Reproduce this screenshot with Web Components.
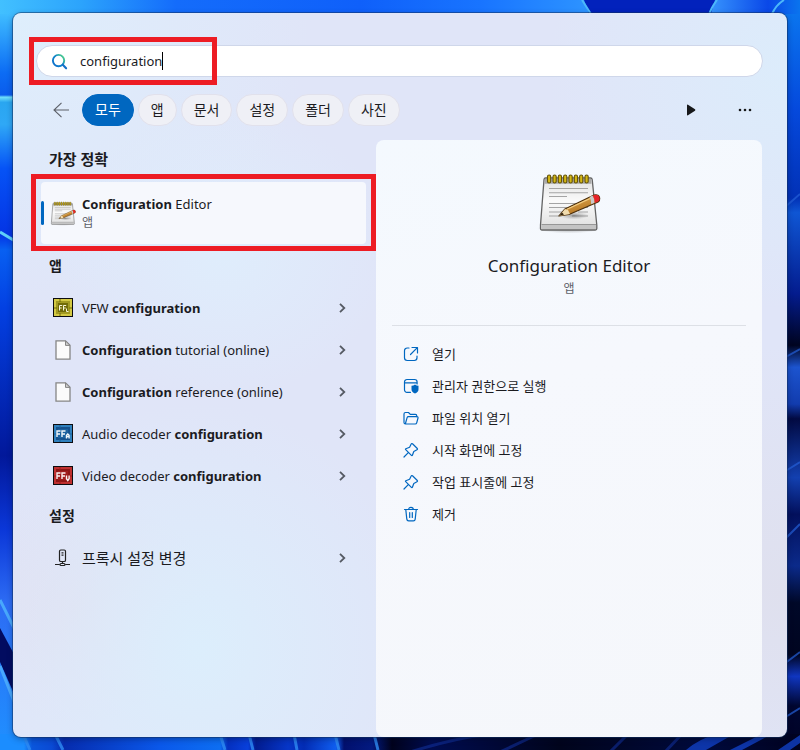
<!DOCTYPE html>
<html lang="ko">
<head>
<meta charset="utf-8">
<title>configuration</title>
<style>
  html, body { margin: 0; }
  body {
    font-family: "Noto Sans", "Noto Sans CJK KR", sans-serif;
    font-size: 13px;
    color: #1b1b1f;
    --accent: #0067c0;
    --mark: #ed1c24;
  }
</style>
</head>
<body>
<desk-top>
  <search-window>
    <search-field slot="search" value="configuration"></search-field>
    <filter-bar slot="filters"></filter-bar>
    <result-group slot="results" heading="가장 정확">
      <result-item best icon="notepad" kind="앱"><b>Configuration</b> Editor</result-item>
    </result-group>
    <result-group slot="results" heading="앱">
      <result-item icon="ffl">VFW <b>configuration</b></result-item>
      <result-item icon="page"><b>Configuration</b> tutorial (online)</result-item>
      <result-item icon="page"><b>Configuration</b> reference (online)</result-item>
      <result-item icon="ffa">Audio decoder <b>configuration</b></result-item>
      <result-item icon="ffv">Video decoder <b>configuration</b></result-item>
    </result-group>
    <result-group slot="results" heading="설정">
      <result-item icon="proxy" korean>프록시 설정 변경</result-item>
    </result-group>
    <detail-pane slot="detail" heading="Configuration Editor" kind="앱">
      <action-item icon="open">열기</action-item>
      <action-item icon="admin">관리자 권한으로 실행</action-item>
      <action-item icon="folder">파일 위치 열기</action-item>
      <action-item icon="pin">시작 화면에 고정</action-item>
      <action-item icon="pin">작업 표시줄에 고정</action-item>
      <action-item icon="trash">제거</action-item>
    </detail-pane>
  </search-window>
</desk-top>

<script>
const badge = (edge, mid, core, glyph) => `
  <svg viewBox="0 0 20 20" aria-hidden="true">
    <rect width="20" height="19" fill="#0c0c10"/><rect x="1" y="1" width="18" height="17" fill="${edge}"/>
    <rect x="3" y="3" width="14" height="13" fill="${mid}"/><rect x="5" y="5" width="10" height="9" fill="${core}"/>
    <path d="M7 1v3M1 10h3M16 10h3M7 15v3" stroke="${core}" stroke-width="1"/>
    ${glyph}
  </svg>`;

const ICONS = {
  notepad: `<svg viewBox="0 0 64 64" aria-hidden="true">
    <defs>
      <linearGradient id="paper" x1="0" y1="0" x2="0" y2="1"><stop offset="0" stop-color="#e2e2e2"/><stop offset=".45" stop-color="#fafafa"/><stop offset="1" stop-color="#dedede"/></linearGradient>
      <linearGradient id="wood" x1="0" y1="0" x2=".5" y2="1"><stop offset="0" stop-color="#e9b45a"/><stop offset="1" stop-color="#b06f1c"/></linearGradient>
      <radialGradient id="shade"><stop offset="0" stop-color="#555" stop-opacity=".55"/><stop offset="1" stop-color="#777" stop-opacity="0"/></radialGradient>
    </defs>
    <ellipse cx="32" cy="58.500" rx="32" ry="5" fill="url(#shade)"/>
    <path d="M8.500 8h45q1.500 0 1.700 1.500L59.800 55v3.500q0 1.500-1.500 1.500H5q-1.500 0-1.500-1.500V55L7 9.500Q7.200 8 8.500 8z" fill="url(#paper)" stroke="#636363" stroke-width="1.300"/>
    <path d="M8 8.700h46l.5 5H7.500z" fill="#a9a9a9"/>
    <path d="M4.500 54.500h54.500v4.500h-54.500z" fill="#c4c4c4"/><path d="M4.500 54.500h54.500" stroke="#888" stroke-width=".8"/>
    <path d="M12 18.500h39M12 22.800h39M12 26.500h18M12 33.500h28M12 37.500h20M12 42h14M12 46h10M45 37.500h6M41 42h10M35 46h16" stroke="#a4a4a4" stroke-width="1.100"/>
    <ellipse cx="37" cy="45.500" rx="15" ry="4" fill="url(#shade)"/>
    <g fill="#d5b812" stroke="#645208" stroke-width="1.100">
      <rect x="10.500" y="5" width="3.200" height="8" rx="1.600"/><rect x="16" y="5" width="3.200" height="8" rx="1.600"/><rect x="21.300" y="5" width="3.200" height="8" rx="1.600"/><rect x="26.600" y="5" width="3.200" height="8" rx="1.600"/><rect x="32" y="5" width="3.200" height="8" rx="1.600"/><rect x="37.300" y="5" width="3.200" height="8" rx="1.600"/><rect x="42.600" y="5" width="3.200" height="8" rx="1.600"/><rect x="48" y="5" width="3.200" height="8" rx="1.600"/>
    </g>
    <path d="M22 46l6-7L57 25q5-1 5.700 3 .3 2.500-1.700 4L32 44.500z" fill="url(#wood)" stroke="#4b2e0a" stroke-width="1.200" stroke-linejoin="round"/>
    <path d="M22 46l6-7 3 1 2 4z" fill="#f1dcae"/><path d="M22 46l3-3.500 2 2.100z" fill="#32220c"/>
    <path d="M30 39.200l23-10.700" stroke="#f3cf85" stroke-width="1.200"/>
    <path d="M52.500 27l3-1.400q2 3 2 7.200l-3.300 1.500q.3-4.200-1.700-7.300z" fill="#c9c9c9"/>
    <path d="M55.800 25.500q5.400-2 6.500 1.500t-1.500 4.800l-3 1.200q0-4.300-2-7.500z" fill="#e5242a"/>
  </svg>`,
  page: `<svg viewBox="0 0 20 20" aria-hidden="true"><path d="M3 .8h9.500L17 5.200v14H3z" fill="#fbfbfb" stroke="#858585" stroke-width="1.300"/><path d="M12.500 1v4.400H17z" fill="#cfcfcf" stroke="#858585"/></svg>`,
  ffl: badge('#d3c943', '#a29a22', '#716b08', '<path d="M6.500 12.500V7.500h2.700M6.500 10h2.200M10.500 12.500V7.500h2.700M10.500 10h2.200M13.500 10.500v3h2" fill="none" stroke="#f8f6d8" stroke-width="1"/>'),
  ffa: badge('#2f80bd', '#15518d', '#1d629f', '<path d="M4 13V7h3.500M4 10h3M9 13V7h3.500M9 10h3M13.500 14.500v-3.200l1.300-1.300 1.300 1.300v3.200M13.500 12.500h2.600" fill="none" stroke="#f2f8fc" stroke-width="1.400"/>'),
  ffv: badge('#bf3030', '#8e1515', '#a01d1d', '<path d="M4 13V7h3.500M4 10h3M9 13V7h3.500M9 10h3M13.500 9.500v3.200l1.300 1.800 1.300-1.800V9.500" fill="none" stroke="#fdf3f3" stroke-width="1.400"/>'),
  proxy: `<svg viewBox="0 0 20 20" aria-hidden="true" fill="none" stroke="#222" stroke-width="1.200"><rect x="6.500" y="2" width="6" height="11.500" rx="1.300"/><path d="M8.500 4.800h2M8.500 7.200h2M9.500 13.500v2M2 16.500h4.800M12.200 16.500h4.800"/><rect x="7" y="15.500" width="5" height="2" rx="1"/></svg>`,
  open: `<svg viewBox="0 0 16 16" aria-hidden="true"><path d="M6 2H4.200A2.700 2.700 0 0 0 1.500 4.700v7.100a2.700 2.700 0 0 0 2.700 2.700h7.100a2.700 2.700 0 0 0 2.700-2.700V10M9 1.500h5.500V7M14.300 1.700L7.500 8.500"/></svg>`,
  admin: `<svg viewBox="0 0 16 16" aria-hidden="true"><path d="M7.500 14.300H4A2.500 2.500 0 0 1 1.500 11.800V4A2.500 2.500 0 0 1 4 1.500h7.600A2.500 2.500 0 0 1 14.100 4v2M1.500 4.800h12.600"/><path d="M12 6.500q1.500 1.300 3.500 1.300v3.400q0 3-3.500 4.300-3.500-1.300-3.500-4.300V7.800q2 0 3.500-1.300z" fill="currentColor" stroke="none"/></svg>`,
  folder: `<svg viewBox="0 0 16 16" aria-hidden="true"><path d="M2.500 14q-1.500 0-1.500-1.500V4Q1 2.500 2.500 2.500h3l1.800 1.800h5q1.500 0 1.500 1.700v.8M2.300 14h9.900q1.200 0 1.500-1.200l1.300-4.800q.3-1.300-1-1.300H5.400q-1 0-1.300 1z"/></svg>`,
  pin: `<svg viewBox="0 0 16 16" aria-hidden="true"><path d="M9.500 1.800l4.800 4.700q.6.800-.3 1.300l-3.200 1.700-1.400 3.800q-.4.700-1 .1L2.700 7.700q-.6-.7.2-1l3.700-1.400L8.200 2q.5-.9 1.300-.2zM5.300 10.700L1 15"/></svg>`,
  trash: `<svg viewBox="0 0 16 16" aria-hidden="true"><path d="M1.500 3.500h13M5.700 3.500q0-2.200 2.300-2.200t2.300 2.200M2.800 3.700l1 9.400q.2 1.700 1.800 1.700h4.800q1.600 0 1.800-1.700l1-9.400M6.700 6.500v5M9.300 6.500v5"/></svg>`,
  chevron: `<svg viewBox="0 0 12 12" aria-hidden="true"><path d="M4 1.800L8.300 6 4 10.200" fill="none" stroke="#555a63" stroke-width="1.800"/></svg>`
};

function define(name, render) {
  customElements.define(name, class extends HTMLElement {
    constructor() {
      super();
      this.attachShadow({ mode: 'open' });
    }
    connectedCallback() { this.shadowRoot.innerHTML = render(this); }
  });
}

define('desk-top', () => `
  <style>
    :host { display: grid; position: relative; min-height: 100vh; box-sizing: border-box; padding: 13px; background: #0440d8; overflow: hidden; }
    .wallpaper { position: absolute; inset: 0; width: 100%; height: 100%; }
  </style>
  <svg class="wallpaper" viewBox="0 0 800 750" preserveAspectRatio="none" aria-hidden="true">
    <defs>
      <linearGradient id="top" x1="0" x2="1" y1="0" y2="0"><stop offset="0" stop-color="#42c0ff"/><stop offset=".1" stop-color="#2ca4fc"/><stop offset=".22" stop-color="#146cfb"/><stop offset=".45" stop-color="#0f60fa"/><stop offset=".6" stop-color="#1874ff"/><stop offset=".73" stop-color="#2c92ff"/><stop offset=".88" stop-color="#3c9cff"/><stop offset=".96" stop-color="#0a48e8"/><stop offset="1" stop-color="#0a74ee"/></linearGradient>
      <linearGradient id="left" x1="0" x2="0" y1="0" y2="1"><stop offset="0" stop-color="#3fbcff"/><stop offset=".08" stop-color="#0c6cf4"/><stop offset=".11" stop-color="#0a5cec"/><stop offset=".113" stop-color="#6fe0fb"/><stop offset=".12" stop-color="#2aa6f0"/><stop offset=".15" stop-color="#2fa8f6"/><stop offset=".21" stop-color="#0653f6"/><stop offset=".3" stop-color="#0434e4"/><stop offset=".32" stop-color="#0860f2"/><stop offset=".4" stop-color="#0340e2"/><stop offset=".6" stop-color="#02189a"/><stop offset=".7" stop-color="#0b37d8"/><stop offset=".8" stop-color="#2d6cf4"/><stop offset="1" stop-color="#1f90ff"/></linearGradient>
      <linearGradient id="right" x1="0" x2="0" y1="0" y2="1"><stop offset="0" stop-color="#0a74ee"/><stop offset=".13" stop-color="#0549dc"/><stop offset=".25" stop-color="#0231b6"/><stop offset=".27" stop-color="#0f56d4"/><stop offset=".38" stop-color="#041c8e"/><stop offset=".45" stop-color="#000420"/><stop offset=".48" stop-color="#1c54cf"/><stop offset=".53" stop-color="#123cae"/><stop offset=".55" stop-color="#020a42"/><stop offset=".63" stop-color="#1340b0"/><stop offset=".68" stop-color="#03105c"/><stop offset=".75" stop-color="#0b2a8a"/><stop offset=".8" stop-color="#000828"/><stop offset=".87" stop-color="#000520"/><stop offset=".9" stop-color="#1036c0"/><stop offset=".94" stop-color="#000630"/><stop offset="1" stop-color="#000224"/></linearGradient>
      <linearGradient id="bottom" x1="0" x2="1" y1="0" y2="0"><stop offset="0" stop-color="#1b8dff"/><stop offset=".03" stop-color="#1b8dff"/><stop offset=".04" stop-color="#0a56dc"/><stop offset=".065" stop-color="#0a4ad4"/><stop offset=".08" stop-color="#062cae"/><stop offset=".2" stop-color="#0a58ea"/><stop offset=".275" stop-color="#0d6ef2"/><stop offset=".285" stop-color="#0530c0"/><stop offset=".31" stop-color="#0840dc"/><stop offset=".32" stop-color="#021c90"/><stop offset=".36" stop-color="#0636c8"/><stop offset=".38" stop-color="#032cb4"/><stop offset=".42" stop-color="#0f5ef0"/><stop offset=".43" stop-color="#02106e"/><stop offset=".465" stop-color="#031a80"/><stop offset=".49" stop-color="#00021c"/><stop offset=".54" stop-color="#000c50"/><stop offset=".7" stop-color="#00041c"/><stop offset=".88" stop-color="#000a3c"/><stop offset="1" stop-color="#000220"/></linearGradient>
    </defs>
    <rect width="800" height="30" fill="url(#top)"/>
    <path d="M584 0h131l-7 24H593z" fill="#0222bc"/><path d="M582 0l9 14M717 0q-6 8-8 15M784 0q-8 5-12 14" fill="none" stroke="#4cb8fa" stroke-width="2"/>
    <rect y="14" width="30" height="736" fill="url(#left)"/>
    <path d="M0 232l15 9" stroke="#5fd0fa" stroke-width="3"/>
    <path d="M0 628l15 28v40L0 662z" fill="#020c60"/><path d="M0 600l15 30M0 666l15 38" stroke="#48a8fc" stroke-width="3"/>
    <rect x="770" y="14" width="30" height="736" fill="url(#right)"/>
    <path d="M784 208l16-14M784 358l16-9M784 472l16-10M784 540l16-16M784 664l16-12M784 718l16-10" stroke="#2560d8" stroke-width="2" opacity=".7"/>
    <rect y="734" width="800" height="16" fill="url(#bottom)"/>
    <path d="M23 734l7 16M55 734l8 16M220 734l5 16M249 734l4 16M294 734l3 16M335 734l4 16M374 734l4 16" stroke="#2f8cf4" stroke-width="3" opacity=".8"/>
    <path d="M410 752q45-14 80-18M500 752l34-16M610 752l18-18M665 752l17-18" stroke="#112f98" stroke-width="3" opacity=".6" fill="none"/>
    <path d="M686 750q14-12 32-16h16l-28 16zM730 750l32-16h10l-30 16zM778 750l22-15v8l-10 7z" fill="#1040c4" opacity=".8"/>
  </svg>
  <slot></slot>`);

define('search-window', () => `
  <style>
    :host {
      display: flex; flex-direction: column; position: relative; box-sizing: border-box; min-width: 0;
      padding-top: 32px; border-radius: 8px; box-shadow: 0 0 0 1px #12306080, 0 2px 6px #00102860;
      background:
        radial-gradient(circle at 100% 8%, #dcecfb 0, #dcecfb00 240px),
        radial-gradient(circle at 0 0, #deeefc 0, #deeefc00 300px),
        radial-gradient(ellipse at 27% 33%, #dfedfc 0, #dfedfc00 170px),
        radial-gradient(ellipse at 24% 88%, #dceefc 0, #dceefc00 230px),
        radial-gradient(ellipse at 8% 82%, #e2dff0 0, #e2dff000 140px),
        radial-gradient(ellipse at 100% 80%, #dfe0ee 0, #dfe0ee00 330px),
        #e0e5f8;
    }
    .search { padding: 0 24px 0 23px; }
    .filters { padding: 17px 24px 14px 40px; }
    main { flex: 1; display: grid; grid-template-columns: minmax(0, 363px) minmax(0, 1fr); padding-right: 25px; }
    .results { padding: 0 10px 24px 28px; }
    .detail { display: grid; }
  </style>
  <div class="search"><slot name="search"></slot></div>
  <div class="filters"><slot name="filters"></slot></div>
  <main>
    <div class="results"><slot name="results"></slot></div>
    <div class="detail"><slot name="detail"></slot></div>
  </main>`);

define('search-field', host => `
  <style>
    :host { display: block; position: relative; }
    label {
      display: flex; align-items: center; height: 32px; box-sizing: border-box; padding: 0 14px;
      border: 1px solid #cfd7ea; border-radius: 16px; background: #fff; cursor: text;
    }
    svg { width: 17px; height: 17px; margin-right: 12px; }
    input { field-sizing: content; border: 0; padding: 0; margin: 0; outline: 0; background: none; font: inherit; font-size: 13px; color: #1b1b1f; line-height: 20px; }
    .caret { width: 1px; height: 18px; background: #000; }
    .mark { position: absolute; left: -7px; top: -8px; width: 188px; height: 48px; box-sizing: border-box; border: 5px solid var(--mark); pointer-events: none; }
  </style>
  <label>
    <svg viewBox="0 0 18 18" aria-hidden="true">
      <defs><linearGradient id="lens" x1="0" y1=".8" x2="1" y2="0"><stop offset="0" stop-color="#0d70cc"/><stop offset=".5" stop-color="#1288c8"/><stop offset=".85" stop-color="#46c890"/></linearGradient></defs>
      <circle cx="8" cy="8" r="6" fill="none" stroke="url(#lens)" stroke-width="2"/>
      <path d="M12.500 12.500l3.500 3.700" stroke="#1570c8" stroke-width="2.200" stroke-linecap="round"/>
    </svg>
    <input type="text" aria-label="검색" value="${host.getAttribute('value')}"><span class="caret"></span>
  </label>
  <div class="mark"></div>`);

define('filter-bar', () => `
  <style>
    :host { display: flex; align-items: center; }
    button { font: inherit; color: inherit; border: 0; padding: 0; background: none; }
    .back { display: flex; width: 16px; margin-right: 13px; }
    .back svg { width: 16px; height: 16px; }
    nav { display: flex; gap: 4px; flex: 1; }
    nav button { height: 32px; padding: 0 12px; font-size: 14px; line-height: 20px; border: 1px solid #e1e1ec; border-radius: 16px; background: #eff0f6; }
    nav button[aria-pressed=true] { background: var(--accent); border-color: var(--accent); color: #fff; }
    .tools { display: flex; gap: 38px; align-items: center; padding-right: 10px; }
    .tools button { display: flex; }
    .tools svg { width: 16px; height: 16px; }
  </style>
  <button class="back" aria-label="뒤로"><svg viewBox="0 0 16 16"><path d="M16 8H1M8.500 .8L1 8l7.500 7.200" fill="none" stroke="#5c6068" stroke-width="1.100"/></svg></button>
  <nav>
    ${['모두', '앱', '문서', '설정', '폴더', '사진'].map((t, i) => `<button aria-pressed="${i === 0}">${t}</button>`).join('')}
  </nav>
  <div class="tools">
    <button aria-label="다음"><svg viewBox="0 0 16 16"><path d="M4 3.300v9.400q0 1 1 .6l7-4.600q.8-.7 0-1.400L5 2.700q-1-.4-1 .6z" fill="#17181a"/></svg></button>
    <button aria-label="옵션"><svg viewBox="0 0 16 16" fill="#17181a"><circle cx="3" cy="8" r="1.300"/><circle cx="8" cy="8" r="1.300"/><circle cx="13" cy="8" r="1.300"/></svg></button>
  </div>`);

define('result-group', host => `
  <style>
    :host { display: block; }
    h2 { margin: 0; padding: 9px 0 11px 8px; font-size: 15px; line-height: 20px; font-weight: 600; }
    :host([heading="앱"]) h2, :host([heading="설정"]) h2 { font-size: 14px; }
  </style>
  <h2>${host.getAttribute('heading')}</h2>
  <slot></slot>`);

define('result-item', host => {
  const best = host.hasAttribute('best');
  return `
  <style>
    :host { display: block; position: relative; }
    :host([best]) { margin: 2px 0 3px; }
    button {
      display: flex; align-items: center; width: 100%; height: 42px; padding: 0 18px 0 12px; margin: 0;
      border: 0; background: none; font: inherit; color: inherit; text-align: left; line-height: 20px;
    }
    :host([korean]) button { font-size: 15px; }
    :host([best]) button { height: 62px; padding-left: 9px; border-radius: 4px; background: #f6f8fd; }
    .icon { flex: none; display: flex; width: 20px; margin-right: 9px; }
    :host([best]) .icon { width: 26px; margin-right: 6px; }
    .icon svg { width: 100%; }
    .text { flex: 1; min-width: 0; }
    small { display: block; margin-top: 1px; padding-bottom: 2px; font-size: 12px; line-height: 16px; color: #5d6068; }
    .chevron { display: flex; width: 12px; }
    .bar { position: absolute; left: 0; top: 19px; width: 3px; height: 24px; border-radius: 2px; background: var(--accent); }
    .mark { position: absolute; inset: -8px -10px -7px; border: 5px solid var(--mark); pointer-events: none; z-index: 1; }
    ::slotted(b) { font-weight: 700; }
  </style>
  <button>
    <span class="icon">${ICONS[host.getAttribute('icon')]}</span>
    <span class="text"><slot></slot>${best ? `<small>${host.getAttribute('kind')}</small>` : ''}</span>
    ${best ? '' : `<span class="chevron">${ICONS.chevron}</span>`}
  </button>
  ${best ? '<span class="bar"></span><span class="mark"></span>' : ''}`;
});

define('detail-pane', host => `
  <style>
    :host { display: block; padding: 30px 16px; border-radius: 8px; background: linear-gradient(165deg, #f4f9fe, #f6f8fd 40%, #f5f7fb); }
    header { display: flex; flex-direction: column; align-items: center; padding-bottom: 28px; border-bottom: 1px solid #dde0e6; }
    header svg { width: 64px; height: 64px; }
    h1 { margin: 20px 0 0; font-size: 17px; line-height: 24px; font-weight: 400; }
    small { margin-top: 3px; font-size: 12px; line-height: 16px; color: #5d6068; }
    .actions { padding-top: 12px; }
  </style>
  <header>${ICONS.notepad}<h1>${host.getAttribute('heading')}</h1><small>${host.getAttribute('kind')}</small></header>
  <div class="actions"><slot></slot></div>`);

define('action-item', host => `
  <style>
    :host { display: block; }
    button { display: flex; align-items: center; gap: 13px; width: 100%; height: 32px; padding: 0 11px; border: 0; background: none; font: inherit; font-size: 13px; line-height: 18px; color: inherit; text-align: left; }
    svg { flex: none; width: 16px; height: 16px; color: var(--accent); fill: none; stroke: currentColor; stroke-width: 1.2; stroke-linecap: round; stroke-linejoin: round; }
  </style>
  <button>${ICONS[host.getAttribute('icon')]}<span><slot></slot></span></button>`);
</script>
</body>
</html>
